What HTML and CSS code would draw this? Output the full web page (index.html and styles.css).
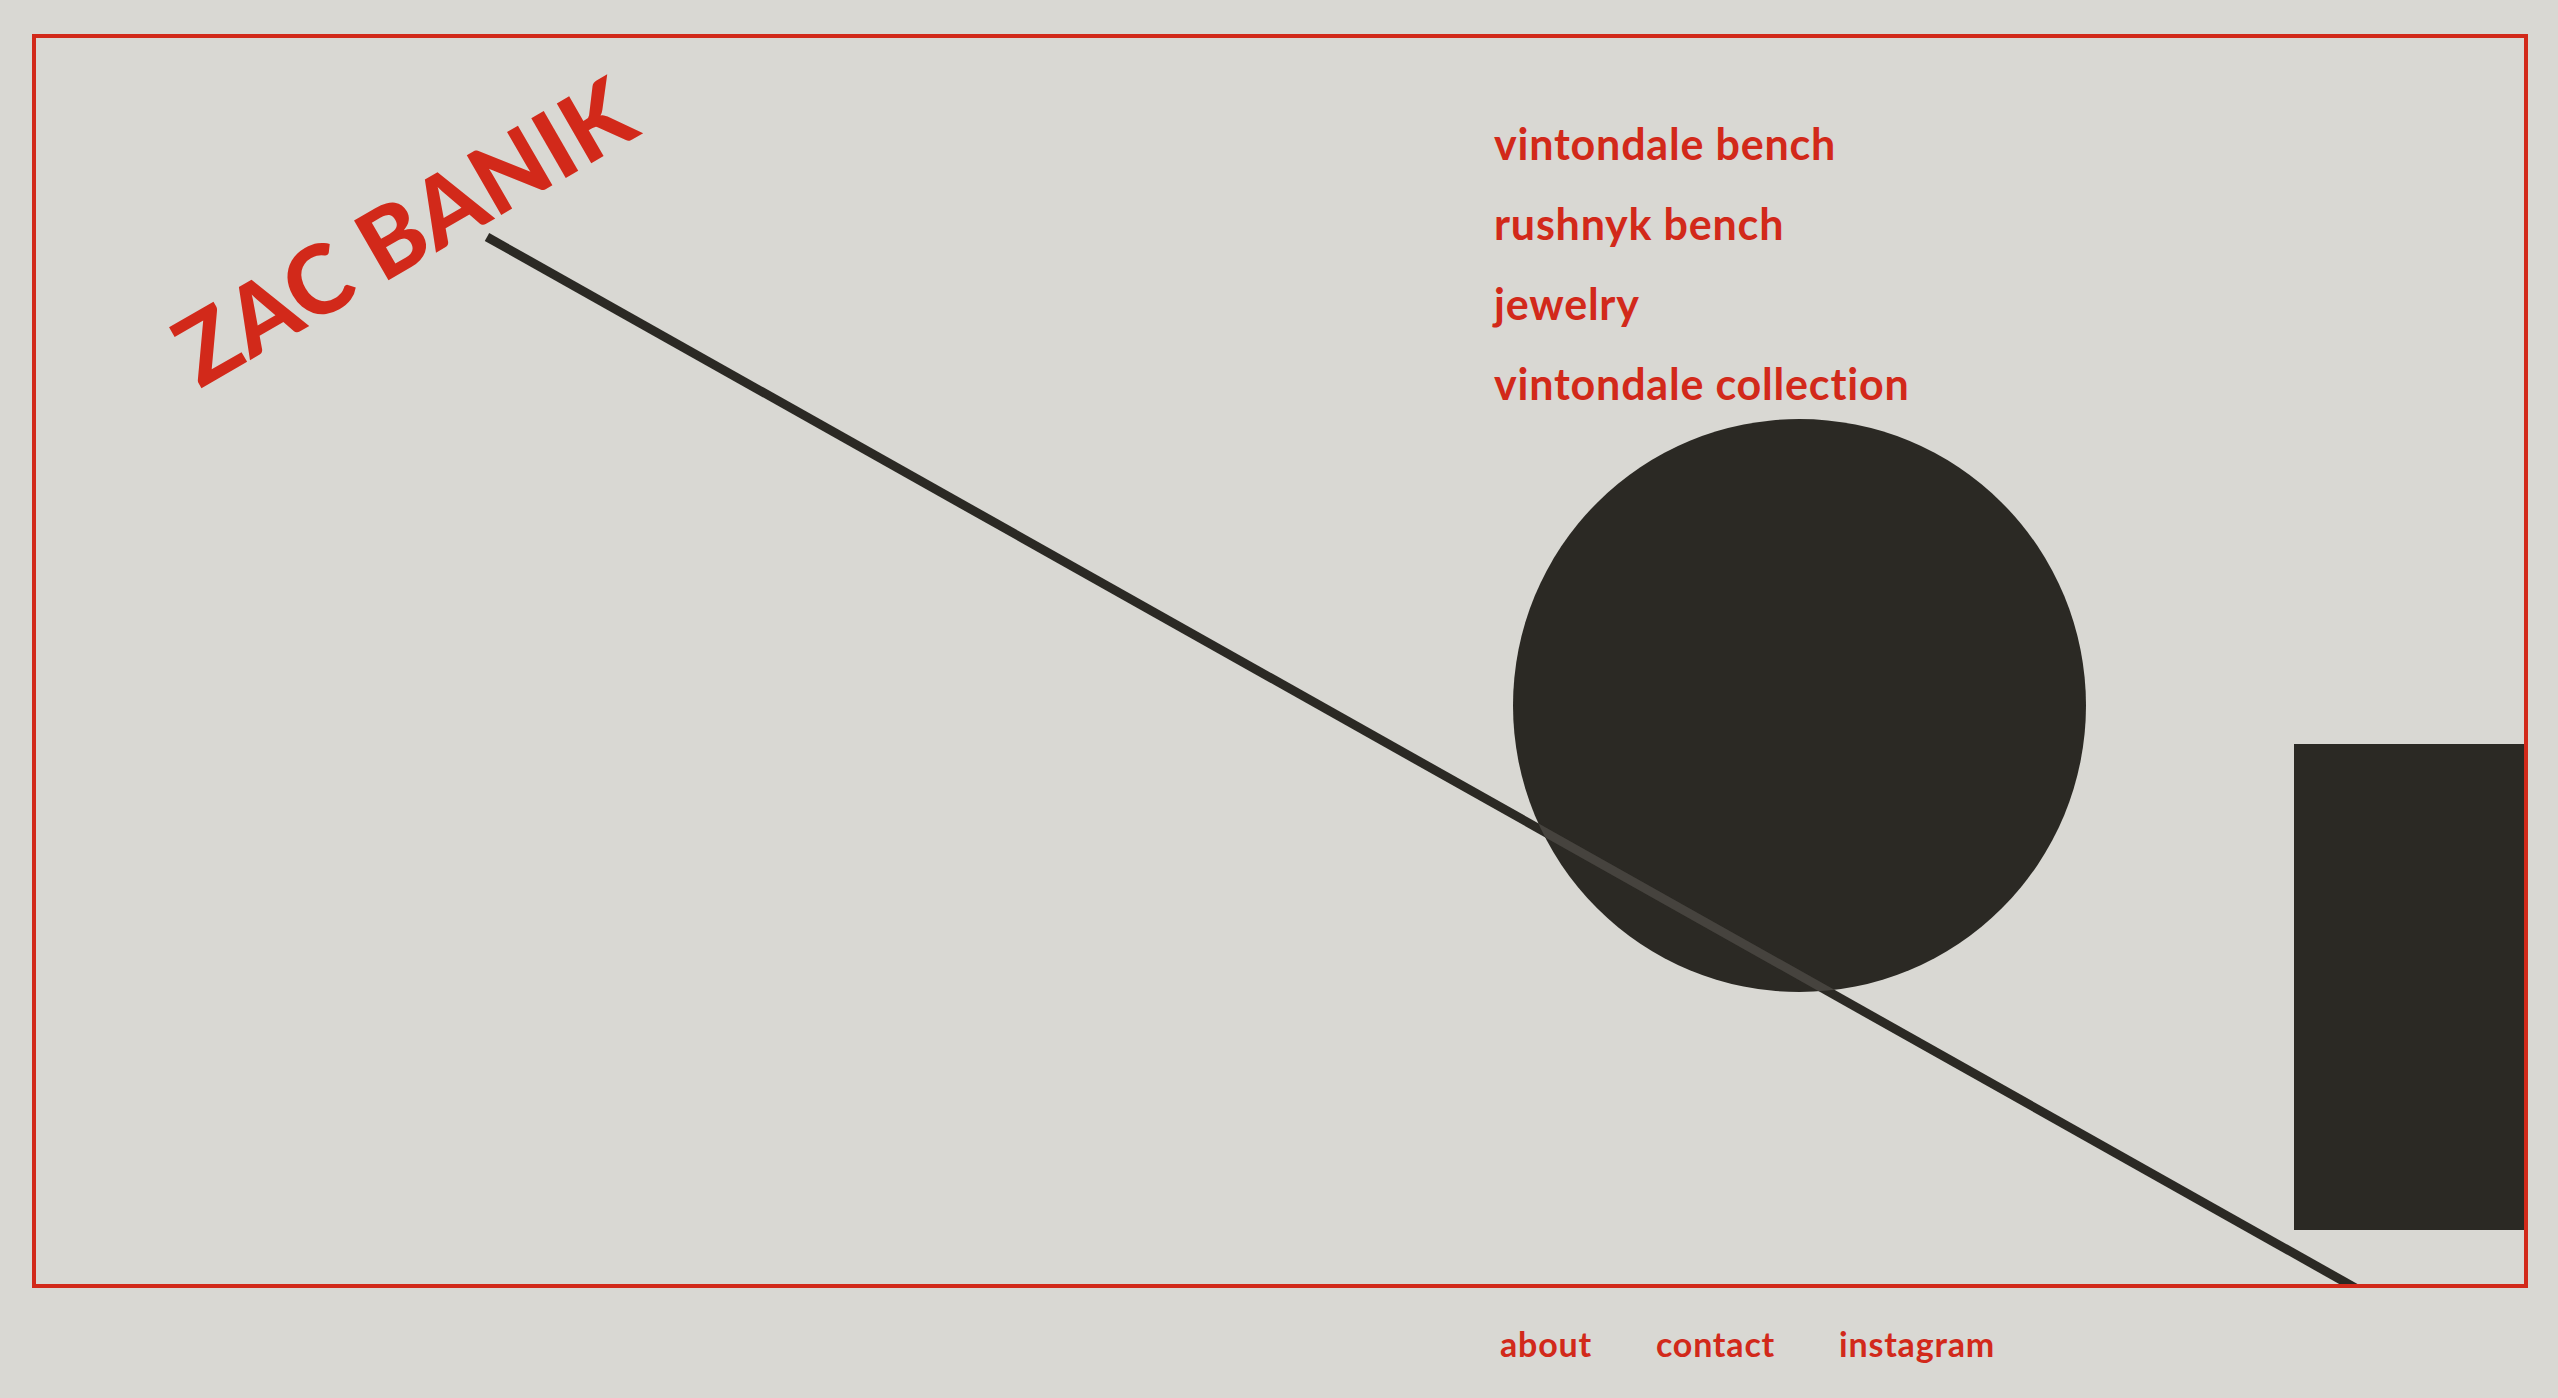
FILE: index.html
```html
<!DOCTYPE html>
<html lang="en">
<head>
<meta charset="utf-8">
<title>Zac Banik</title>
<link rel="stylesheet" href="styles.css">
</head>
<body>
<main class="frame">
  <svg class="art" viewBox="0 0 2488 1246" width="2488" height="1246" aria-hidden="true">
    <defs>
      <clipPath id="disc"><circle cx="1763.5" cy="667.5" r="286.5"/></clipPath>
    </defs>
    <circle cx="1763.5" cy="667.5" r="286.5" fill="#2b2924"/>
    <rect x="2258" y="706" width="230" height="486" fill="#2b2924"/>
    <line x1="451" y1="199" x2="2339" y2="1261" stroke="#2b2924" stroke-width="9"/>
    <line x1="451" y1="199" x2="2339" y2="1261" stroke="#46433e" stroke-width="9" clip-path="url(#disc)"/>
  </svg>
  <h1 class="logo">ZAC BANIK</h1>
  <nav class="menu">
    <a href="#">vintondale bench</a>
    <a href="#">rushnyk bench</a>
    <a href="#">jewelry</a>
    <a href="#">vintondale collection</a>
  </nav>
</main>
<footer class="foot">
  <a href="#">about</a>
  <a href="#">contact</a>
  <a href="#">instagram</a>
</footer>
</body>
</html>
```

FILE: styles.css
```css
html, body {
  margin: 0;
  padding: 0;
  background: #d9d8d3;
}
body {
  padding: 34px 30px 0 32px;
  height: 1398px;
  box-sizing: border-box;
  overflow: hidden;
  font-family: Lato, "Open Sans", sans-serif;
  letter-spacing: 0.05em;
  color: #d2291a;
}
a {
  color: #d2291a;
  text-decoration: none;
}
.frame {
  position: relative;
  height: 1254px;
  box-sizing: border-box;
  border: 4px solid #d2291a;
  overflow: hidden;
  display: grid;
  grid-template-columns: 1458px auto;
}
.art {
  position: absolute;
  left: 0;
  top: 0;
  display: block;
}
.logo {
  position: absolute;
  left: 164px;
  top: 267px;
  margin: 0;
  font-size: 95px;
  line-height: 95px;
  font-weight: 900;
  white-space: nowrap;
  transform-origin: 0 84px;
  transform: rotate(-30deg);
}
.menu {
  grid-column: 2;
  position: relative;
  display: flex;
  flex-direction: column;
  align-items: flex-start;
  padding-top: 66px;
  font-size: 43px;
  line-height: 80px;
  font-weight: 700;
}
.foot {
  display: flex;
  gap: 64px;
  padding-left: 1468px;
  padding-top: 36px;
  font-size: 34px;
  line-height: 40px;
  font-weight: 700;
}
```
